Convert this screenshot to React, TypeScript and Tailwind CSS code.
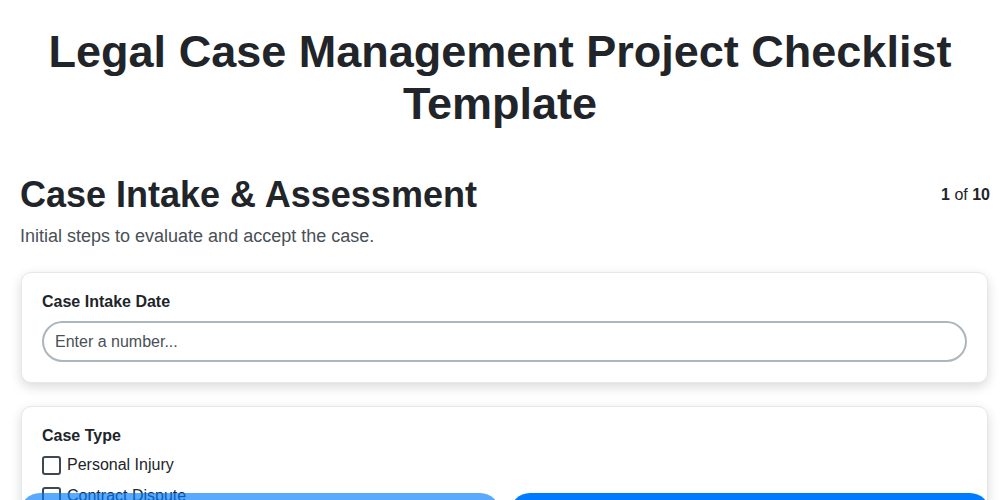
import React from "react";

function CheckRow({ label }: { label: string }) {
  return (
    <label className="flex items-center h-[24px] text-[16px] text-[#212529]">
      <span className="w-[19px] h-[19px] border-2 border-[#3f4654] rounded-[3px] bg-white shrink-0" />
      <span className="ml-[6px] leading-[24px]">{label}</span>
    </label>
  );
}

export default function App() {
  return (
    <div className="min-h-screen bg-white text-[#212529]" style={{ fontFamily: '"Liberation Sans", Arial, sans-serif' }}>
      <h1 className="pt-[26px] text-center text-[45px] leading-[51.5px] font-bold text-[#212529]">
        Legal Case Management Project Checklist
        <br />
        Template
      </h1>

      <div className="pl-[20px] pr-[10px] pt-[44px]">
        <div className="flex items-center justify-between">
          <h2 className="text-[36px] leading-[44px] font-bold text-[#212529]">Case Intake &amp; Assessment</h2>
          <div className="text-[16px] leading-[24px] text-[#212529]">
            <span className="font-bold">1</span> of <span className="font-bold">10</span>
          </div>
        </div>
        <p className="mt-[6px] text-[18px] leading-[27px] text-[#495057]">Initial steps to evaluate and accept the case.</p>

        <div className="mt-[22px] ml-[1px] mr-[2px] flex flex-col gap-[23px] pb-[120px]">
          <div className="rounded-[10px] border border-[#e5e7eb] bg-white px-[20px] pt-[21px] pb-[20px] shadow-[0_4px_12px_rgba(0,0,0,0.15)]">
            <div className="text-[16px] leading-[16px] font-bold text-[#212529]">Case Intake Date</div>
            <input
              type="text"
              placeholder="Enter a number..."
              className="mt-[11px] block w-full h-[41px] rounded-full border-2 border-[#adb5bd] bg-white px-[11px] text-[16px] text-[#212529] placeholder:text-[#495057] outline-none"
            />
          </div>

          <div className="rounded-[10px] border border-[#e5e7eb] bg-white px-[20px] pt-[21px] pb-[20px] shadow-[0_4px_12px_rgba(0,0,0,0.15)]">
            <div className="text-[16px] leading-[16px] font-bold text-[#212529]">Case Type</div>
            <div className="mt-[9px] flex flex-col gap-[7px]">
              <CheckRow label="Personal Injury" />
              <CheckRow label="Contract Dispute" />
              <CheckRow label="Family Law" />
              <CheckRow label="Criminal Defense" />
              <CheckRow label="Other" />
            </div>
          </div>
        </div>
      </div>

      <div className="fixed left-0 right-0 top-[493px] pl-[20px] pr-[10px] flex gap-[10px]">
        <button className="flex-1 h-[40px] rounded-full bg-[#007bff] opacity-65 text-white text-[16px] font-bold">
          Previous
        </button>
        <button className="flex-1 h-[40px] rounded-full bg-[#007bff] text-white text-[16px] font-bold">
          Next
        </button>
      </div>
    </div>
  );
}
